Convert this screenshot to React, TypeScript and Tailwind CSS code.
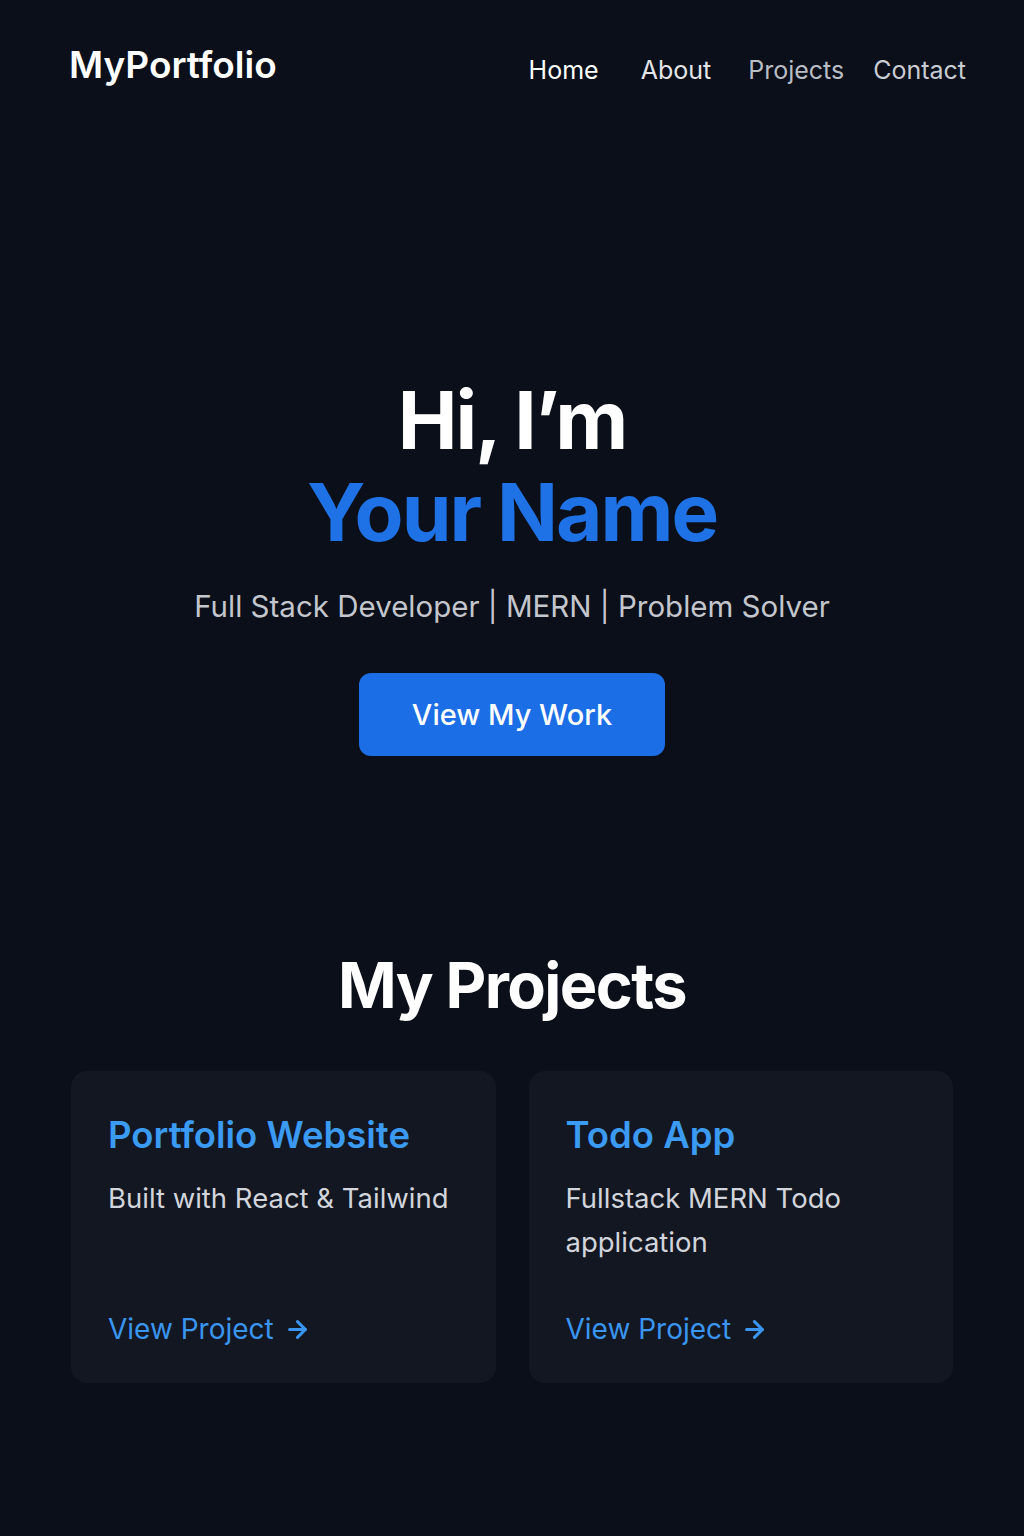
import { ArrowRight } from "lucide-react";

const projects = [
  { title: "Portfolio Website", desc: "Built with React & Tailwind" },
  { title: "Todo App", desc: "Fullstack MERN Todo application" },
];

function ProjectCard({ title, desc }: { title: string; desc: string }) {
  return (
    <div className="flex h-[312px] flex-col rounded-2xl bg-[#121722] px-[37px] pt-[40px] pb-[34px]">
      <h3 className="text-[36.5px] leading-[48px] font-semibold text-[#3b9af2]">{title}</h3>
      <p className="mt-[17px] text-[27.5px] leading-[44px] text-[#d2d5db]">{desc}</p>
      <a href="#" className="mt-auto inline-flex items-center gap-2.5 text-[28px] leading-[40px] text-[#3a95f0]">
        View Project
        <ArrowRight className="h-[27px] w-[27px]" strokeWidth={2.75} />
      </a>
    </div>
  );
}

export default function App() {
  return (
    <div className="min-h-[1536px] bg-[#0a0f1a] font-['Inter',sans-serif] text-white">
      <header className="flex h-[90px] items-start justify-between pt-[40px] pr-[58px] pl-[69px]">
        <span className="text-[37px] leading-[50px] font-semibold">MyPortfolio</span>
        <nav className="flex items-center pt-[5px] text-[25px] leading-[50px]">
          <a href="#" className="text-white">Home</a>
          <a href="#" className="ml-[42px] text-[#e3e5e8]">About</a>
          <a href="#" className="ml-[37px] text-[#b9bdc4]">Projects</a>
          <a href="#" className="ml-[29px] text-[#c9ccd2]">Contact</a>
        </nav>
      </header>

      <section className="mt-[284px] flex flex-col items-center text-center">
        <h1 className="text-[80px] leading-[92px] font-bold tracking-tight">
          Hi, I’m
          <br />
          <span className="text-[#1f72e6]">Your Name</span>
        </h1>
        <p className="mt-[28px] text-[29.5px] leading-[40px] text-[#c3c7cd]">
          Full Stack Developer | MERN | Problem Solver
        </p>
        <a
          href="#"
          className="mt-[47px] flex h-[83px] w-[306px] items-center justify-center rounded-xl bg-[#1c6ee6] text-[29px] font-medium"
        >
          View My Work
        </a>
      </section>

      <section className="mt-[189px] px-[71px]">
        <h2 className="text-center text-[63px] leading-[80px] font-bold tracking-tight">My Projects</h2>
        <div className="mt-[46px] grid grid-cols-2 gap-[33px]">
          {projects.map((p) => (
            <ProjectCard key={p.title} {...p} />
          ))}
        </div>
      </section>
    </div>
  );
}
